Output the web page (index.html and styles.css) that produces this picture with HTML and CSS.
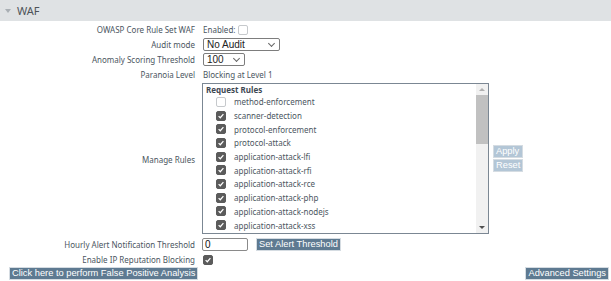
FILE: index.html
```html
<!DOCTYPE html>
<html lang="en">
<head>
	<meta charset="UTF-8">
	<title>WAF</title>
	<link rel="stylesheet" href="styles.css">
</head>
<body>
	<div class="section-head">
		<span class="arrow"></span>
		<span class="section-title">WAF</span>
	</div>
	<div class="form">
		<div class="label">OWASP Core Rule Set WAF</div>
		<div class="value">Enabled: <span class="cb"></span></div>

		<div class="label">Audit mode</div>
		<div class="value"><span class="select wide">No Audit<span class="chev"></span></span></div>

		<div class="label">Anomaly Scoring Threshold</div>
		<div class="value"><span class="select narrow">100<span class="chev"></span></span></div>

		<div class="label">Paranoia Level</div>
		<div class="value">Blocking at Level 1</div>

		<div class="label">Manage Rules</div>
		<div class="value rules-row">
			<div class="listbox">
				<div class="list">
					<div class="group">Request Rules</div>
					<div class="item"><span class="cb"></span>method-enforcement</div>
					<div class="item"><span class="cb on"></span>scanner-detection</div>
					<div class="item"><span class="cb on"></span>protocol-enforcement</div>
					<div class="item"><span class="cb on"></span>protocol-attack</div>
					<div class="item"><span class="cb on"></span>application-attack-lfi</div>
					<div class="item"><span class="cb on"></span>application-attack-rfi</div>
					<div class="item"><span class="cb on"></span>application-attack-rce</div>
					<div class="item"><span class="cb on"></span>application-attack-php</div>
					<div class="item"><span class="cb on"></span>application-attack-nodejs</div>
					<div class="item"><span class="cb on"></span>application-attack-xss</div>
					<div class="item"><span class="cb on"></span></div>
				</div>
				<div class="scrollbar">
					<span class="up"></span>
					<span class="thumb"></span>
					<span class="down"></span>
				</div>
			</div>
			<div class="rule-btns">
				<span class="btn dim">Apply</span>
				<span class="btn dim">Reset</span>
			</div>
		</div>

		<div class="label">Hourly Alert Notification Threshold</div>
		<div class="value"><span class="input">0</span><span class="btn">Set Alert Threshold</span></div>

		<div class="label">Enable IP Reputation Blocking</div>
		<div class="value"><span class="cb on"></span></div>
	</div>
	<div class="footer">
		<span class="btn">Click here to perform False Positive Analysis</span>
		<span class="btn">Advanced Settings</span>
	</div>
</body>
</html>
```

FILE: styles.css
```css
body{
	margin:0;
	padding:0;
	background:#fff;
	font-family:"Noto Sans", "Open Sans", sans-serif;
	font-size:8px;
	color:#4b5661;
}
.section-head{
	height:21px;
	background:#dfe2e4;
	display:flex;
	align-items:center;
	padding-left:5px;
}
.arrow{
	width:0;
	height:0;
	border-left:3.5px solid transparent;
	border-right:3.5px solid transparent;
	border-top:4px solid #a9afb4;
	margin-right:6px;
	margin-top:1px;
}
.section-title{
	font-size:11px;
	color:#4e5358;
}
.form{
	display:grid;
	grid-template-columns:195px 1fr;
	column-gap:8px;
	row-gap:2px;
	padding-top:2px;
}
.label{
	text-align:right;
	display:flex;
	align-items:center;
	justify-content:flex-end;
	min-height:13px;
}
.value{
	display:flex;
	align-items:center;
	min-height:13px;
}
.cb{
	display:inline-block;
	width:10px;
	height:10px;
	box-sizing:border-box;
	border:1px solid #c6c9cc;
	border-radius:2px;
	background:#fff;
	margin-left:3px;
}
.cb.on{
	border-color:#5b5b5b;
	background:#5b5b5b url("data:image/svg+xml,%3Csvg xmlns='http://www.w3.org/2000/svg' viewBox='0 0 10 10'%3E%3Cpath d='M2 5.2 L4.1 7.2 L8 2.6' fill='none' stroke='%23fff' stroke-width='1.5'/%3E%3C/svg%3E") no-repeat center/100%;
}
.value > .cb.on{
	margin-left:0;
}
.select{
	position:relative;
	display:inline-block;
	height:13px;
	box-sizing:border-box;
	border:1px solid #7d7d7d;
	border-radius:2px;
	font-family:"Liberation Sans", Arial, sans-serif;
	font-size:10px;
	line-height:11px;
	padding-left:3px;
	color:#222;
}
.select.wide{
	width:77px;
}
.select.narrow{
	width:42px;
}
.chev{
	position:absolute;
	right:5px;
	top:2px;
	width:4px;
	height:4px;
	border-right:1px solid #666;
	border-bottom:1px solid #666;
	transform:rotate(45deg);
}
.rules-row{
	align-items:center;
	margin-bottom:2px;
}
.listbox{
	width:287px;
	height:151px;
	box-sizing:border-box;
	border:1px solid #7b8793;
	display:flex;
	margin-left:-1px;
}
.list{
	flex:1;
	overflow:hidden;
	padding:0 0 0 3px;
}
.group{
	font-weight:bold;
	color:#3d4853;
	height:11px;
	line-height:11px;
}
.item{
	display:flex;
	align-items:center;
	height:13.7px;
	padding-left:10px;
	color:#4b5661;
}
.item .cb{
	margin:0 8px 0 0;
}
.scrollbar{
	width:12px;
	background:#f1f1f1;
	display:flex;
	flex-direction:column;
	align-items:center;
}
.up,.down{
	width:0;
	height:0;
	border-left:3px solid transparent;
	border-right:3px solid transparent;
	margin:4px 0;
}
.up{
	border-bottom:3px solid #b0b0b0;
}
.down{
	border-top:3px solid #505050;
	margin-top:auto;
}
.thumb{
	width:12px;
	height:49px;
	background:#c1c1c1;
}
.rule-btns{
	display:flex;
	flex-direction:column;
	gap:1px;
	margin-left:4px;
}
.btn{
	display:inline-block;
	background:#5e7a91;
	color:#fff;
	font-family:"Liberation Sans", Arial, sans-serif;
	font-size:9.3px;
	line-height:11px;
	height:11px;
	padding:0 2px;
	border:1px solid #d5dce2;
	white-space:nowrap;
}
.btn.dim{
	background:#b3c6d6;
}
.input{
	display:inline-block;
	width:46px;
	height:13px;
	box-sizing:border-box;
	border:1px solid #8a8a8a;
	border-radius:2px;
	font-family:"Liberation Sans", Arial, sans-serif;
	font-size:10px;
	line-height:11px;
	padding-left:2px;
	color:#111;
	margin-right:8px;
	margin-left:-1px;
}
.footer{
	display:flex;
	justify-content:space-between;
	padding:1px 2px 0 9px;
}
```
